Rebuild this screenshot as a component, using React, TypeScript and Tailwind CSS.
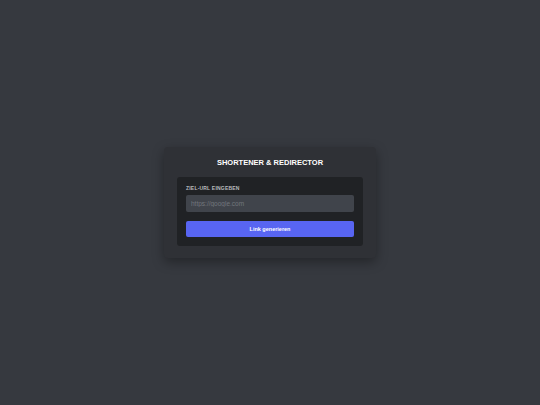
export default function App() {
    return (
        <main className="min-h-screen w-full bg-[#36393f] flex items-center justify-center font-['Liberation_Sans',Arial,sans-serif]">
            <div className="w-[212px] rounded-[4px] bg-[#2f3136] px-[13px] pt-[11px] pb-[12px] shadow-[0_4px_12px_rgba(0,0,0,0.35)]">
                <h1 className="text-center text-[7.5px] leading-[10px] font-bold text-white mb-[9px]">
                    SHORTENER &amp; REDIRECTOR
                </h1>
                <div className="rounded-[3px] bg-[#202225] p-[9px]">
                    <label className="block text-[5px] leading-[5px] font-bold uppercase tracking-[0.2px] text-[#b9bbbe] mb-[4px]">
                        Ziel-URL eingeben
                    </label>
                    <input
                        type="text"
                        placeholder="https://google.com"
                        className="block w-full h-[17px] rounded-[2px] bg-[#40444b] px-[5px] text-[6.5px] text-[#dcddde] placeholder:text-[#72767d] outline-none border-0"
                    />
                    <button className="mt-[9px] block w-full h-[16px] rounded-[2px] bg-[#5865f2] text-[5.5px] font-bold text-white">
                        Link generieren
                    </button>
                </div>
            </div>
        </main>
    );
}
